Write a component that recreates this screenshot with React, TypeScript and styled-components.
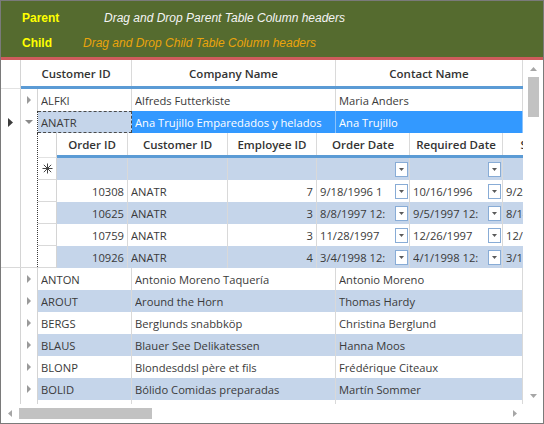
import React from "react";
import styled, { createGlobalStyle } from "styled-components";

const GlobalStyle = createGlobalStyle`
  html, body { margin: 0; padding: 0; background: #ffffff; }
  *, *::before, *::after { box-sizing: border-box; }
`;

const FONT = `"Open Sans", "Noto Sans", Arial, sans-serif`;
const LINE = "#d9d9d9";
const ALT = "#c5d5ea";
const SEL = "#3399ff";
const ACCENT = "#5b9bd5";

type Dir = "right" | "down" | "up" | "left";

const Tri: React.FC<{ dir: Dir; w: number; h: number; color: string }> = ({ dir, w, h, color }) => {
  let pts = "";
  if (dir === "right") pts = `0,0 ${w},${h / 2} 0,${h}`;
  if (dir === "left") pts = `${w},0 0,${h / 2} ${w},${h}`;
  if (dir === "down") pts = `0,0 ${w},0 ${w / 2},${h}`;
  if (dir === "up") pts = `0,${h} ${w},${h} ${w / 2},0`;
  return (
    <svg width={w} height={h} viewBox={`0 0 ${w} ${h}`} style={{ display: "block" }}>
      <polygon points={pts} fill={color} />
    </svg>
  );
};

const NewRowMark: React.FC = () => (
  <svg width="11" height="11" viewBox="0 0 11 11" style={{ display: "block" }}>
    <g stroke="#444" strokeWidth="1" fill="none">
      <line x1="5.5" y1="0.5" x2="5.5" y2="10.5" />
      <line x1="0.5" y1="5.5" x2="10.5" y2="5.5" />
      <line x1="1.8" y1="1.8" x2="9.2" y2="9.2" />
      <line x1="9.2" y1="1.8" x2="1.8" y2="9.2" />
    </g>
  </svg>
);

/* ---------- frame & drop panel ---------- */

const Frame = styled.div`
  width: 544px;
  height: 424px;
  border: 1px solid #7a7a7a;
  display: flex;
  flex-direction: column;
  background: #ffffff;
  overflow: hidden;
  font-family: ${FONT};
  font-size: 11.2px;
  color: #3a3a3a;
`;

const DropPanel = styled.div`
  flex: none;
  height: 59px;
  background: #556b2f;
  border-bottom: 3px solid #cd5c5c;
  padding-top: 4px;
  display: flex;
  flex-direction: column;
  font-family: "Liberation Sans", Arial, sans-serif;
  font-size: 12px;
`;

const DropRow = styled.div`
  height: 25px;
  display: flex;
  align-items: center;
  padding-left: 21px;
`;

const DropLabel = styled.span<{ $w: number }>`
  flex: none;
  width: ${(p) => p.$w}px;
  color: #ffff00;
  font-weight: bold;
`;

const DropHint = styled.span<{ $color: string }>`
  color: ${(p) => p.$color};
  font-style: italic;
`;

/* ---------- grid shell ---------- */

const GridArea = styled.div`
  flex: 1;
  display: flex;
  flex-direction: column;
  min-height: 0;
`;

const GridMain = styled.div`
  flex: 1;
  display: flex;
  min-height: 0;
`;

const Viewport = styled.div`
  flex: 1;
  min-width: 0;
  overflow: hidden;
  display: flex;
  flex-direction: column;
`;

/* ---------- header ---------- */

const HeaderRow = styled.div<{ $h: number }>`
  flex: none;
  display: flex;
  height: ${(p) => p.$h}px;
`;

const Corner = styled.div<{ $w: number }>`
  flex: none;
  width: ${(p) => p.$w}px;
  border-right: 1px solid #d4d4d4;
  border-bottom: 1px solid #e2e2e2;
  background: #ffffff;
`;

const HeadCells = styled.div`
  flex: 1;
  min-width: 0;
  display: flex;
  border-bottom: 3px solid ${ACCENT};
  overflow: hidden;
`;

const HeadCell = styled.div<{ $w: number }>`
  flex: none;
  width: ${(p) => p.$w}px;
  display: flex;
  align-items: center;
  justify-content: center;
  font-size: 11.5px;
  font-weight: 600;
  color: #333333;
  border-right: 1px solid #dadada;
  white-space: nowrap;
  overflow: hidden;
`;

/* ---------- rows ---------- */

const Row = styled.div<{ $h: number }>`
  flex: none;
  display: flex;
  height: ${(p) => p.$h}px;
`;

const SideCell = styled.div<{ $w: number; $lined?: boolean; $dotted?: boolean }>`
  flex: none;
  width: ${(p) => p.$w}px;
  display: flex;
  align-items: center;
  justify-content: center;
  background: #ffffff;
  border-right: 1px ${(p) => (p.$dotted ? "dotted #3a3a3a" : "solid #d4d4d4")};
  border-bottom: ${(p) => (p.$lined ? `1px solid ${LINE}` : "none")};
`;

type CellState = "plain" | "alt" | "selected" | "focus";

const DataCell = styled.div<{ $w: number; $state: CellState; $align?: "left" | "right" }>`
  flex: none;
  width: ${(p) => p.$w}px;
  display: flex;
  align-items: center;
  justify-content: ${(p) => (p.$align === "right" ? "flex-end" : "flex-start")};
  padding: 0 ${(p) => (p.$align === "right" ? 3 : 0)}px 0 ${(p) => (p.$align === "right" ? 0 : 3)}px;
  white-space: nowrap;
  overflow: hidden;
  background: ${(p) => (p.$state === "selected" ? SEL : p.$state === "plain" ? "#ffffff" : ALT)};
  color: ${(p) => (p.$state === "selected" ? "#ffffff" : "#3a3a3a")};
  border-right: 1px solid ${(p) => (p.$state === "selected" ? "#8cc3fb" : LINE)};
  ${(p) =>
    p.$state === "focus"
      ? `border: 1px dashed #4a4a4a; border-left: none; padding-left: 3px;`
      : ""}
`;

const CellText = styled.span`
  flex: 1;
  min-width: 0;
  overflow: hidden;
  white-space: nowrap;
`;

const DropBtn = styled.span`
  flex: none;
  width: 13px;
  height: 15px;
  margin-right: 1px;
  border: 1px solid #88acd6;
  background: #ffffff;
  display: flex;
  align-items: center;
  justify-content: center;
`;

/* ---------- detail (child table) ---------- */

const DetailRow = styled.div<{ $h: number }>`
  flex: none;
  display: flex;
  height: ${(p) => p.$h}px;
`;

const DetailSide = styled.div`
  flex: none;
  display: flex;
  border-bottom: 1px solid ${LINE};
`;

const ChildGrid = styled.div`
  flex: 1;
  min-width: 0;
  overflow: hidden;
  display: flex;
  flex-direction: column;
`;

/* ---------- scrollbars ---------- */

const VScroll = styled.div`
  flex: none;
  width: 20px;
  display: flex;
  flex-direction: column;
  background: #ffffff;
`;

const ArrowBox = styled.div<{ $h?: number; $w?: number }>`
  flex: none;
  ${(p) => (p.$h ? `height: ${p.$h}px;` : "")}
  ${(p) => (p.$w ? `width: ${p.$w}px;` : "")}
  display: flex;
  align-items: center;
  justify-content: center;
`;

const VThumb = styled.div`
  flex: none;
  width: 11px;
  height: 40px;
  margin-left: 5px;
  background: #c2c2c2;
`;

const Spacer = styled.div`
  flex: 1;
`;

const HScroll = styled.div`
  flex: none;
  height: 19px;
  display: flex;
  background: #ffffff;
`;

const HTrack = styled.div`
  flex: 1;
  display: flex;
`;

const HThumb = styled.div`
  flex: none;
  width: 133px;
  height: 11px;
  margin-top: 4px;
  background: #c2c2c2;
`;

const ScrollCorner = styled.div`
  flex: none;
  width: 20px;
`;

/* ---------- data ---------- */

const parentCols = [
  { key: "id", title: "Customer ID", w: 94 },
  { key: "company", title: "Company Name", w: 204 },
  { key: "contact", title: "Contact Name", w: 187 },
];

const customers = [
  ["ALFKI", "Alfreds Futterkiste", "Maria Anders"],
  ["ANATR", "Ana Trujillo Emparedados y helados", "Ana Trujillo"],
  ["ANTON", "Antonio Moreno Taquería", "Antonio Moreno"],
  ["AROUT", "Around the Horn", "Thomas Hardy"],
  ["BERGS", "Berglunds snabbköp", "Christina Berglund"],
  ["BLAUS", "Blauer See Delikatessen", "Hanna Moos"],
  ["BLONP", "Blondesddsl père et fils", "Frédérique Citeaux"],
  ["BOLID", "Bólido Comidas preparadas", "Martín Sommer"],
  ["", "", ""],
];

const childCols = [
  { title: "Order ID", w: 71 },
  { title: "Customer ID", w: 100 },
  { title: "Employee ID", w: 89 },
  { title: "Order Date", w: 93 },
  { title: "Required Date", w: 93 },
  { title: "Shipped Date", w: 110 },
];

const orders = [
  ["10308", "ANATR", "7", "9/18/1996 1", "10/16/1996", "9/24/1996"],
  ["10625", "ANATR", "3", "8/8/1997 12:", "9/5/1997 12:", "8/14/1997"],
  ["10759", "ANATR", "3", "11/28/1997", "12/26/1997", "12/12/1997"],
  ["10926", "ANATR", "4", "3/4/1998 12:", "4/1/1998 12:", "3/11/1998"],
];

const SELECTED = 1;

const ParentRow: React.FC<{ data: string[]; index: number }> = ({ data, index }) => {
  const selected = index === SELECTED;
  const alt = index % 2 === 1;
  const empty = data[0] === "";
  return (
    <Row $h={22}>
      <SideCell $w={20}>{selected && <Tri dir="right" w={5} h={9} color="#3c3c3c" />}</SideCell>
      <SideCell $w={17} $dotted={selected}>
        {!empty && (selected ? <Tri dir="down" w={8} h={4} color="#8a8a8a" /> : <Tri dir="right" w={4} h={8} color="#9a9a9a" />)}
      </SideCell>
      {parentCols.map((c, ci) => {
        const state: CellState = selected ? (ci === 0 ? "focus" : "selected") : alt ? "alt" : "plain";
        return (
          <DataCell key={c.key} $w={c.w} $state={state}>
            <CellText>{data[ci]}</CellText>
          </DataCell>
        );
      })}
    </Row>
  );
};

const ChildRow: React.FC<{ data?: string[]; alt: boolean }> = ({ data, alt }) => {
  const state: CellState = alt ? "alt" : "plain";
  return (
    <Row $h={22}>
      <SideCell $w={19} $lined>
        {!data && <NewRowMark />}
      </SideCell>
      {childCols.map((c, ci) => (
        <DataCell key={c.title} $w={c.w} $state={state} $align={ci === 0 || ci === 2 ? "right" : "left"}>
          {ci === 0 || ci === 2 ? (
            data ? data[ci] : ""
          ) : (
            <>
              <CellText>{data ? data[ci] : ""}</CellText>
              {(ci === 3 || ci === 4) && (
                <DropBtn>
                  <Tri dir="down" w={5} h={3} color="#5a5a5a" />
                </DropBtn>
              )}
            </>
          )}
        </DataCell>
      ))}
    </Row>
  );
};

export default function App() {
  return (
    <>
      <GlobalStyle />
      <Frame>
        <DropPanel>
          <DropRow>
            <DropLabel $w={82}>Parent</DropLabel>
            <DropHint $color="#f4f4f4">Drag and Drop Parent Table Column headers</DropHint>
          </DropRow>
          <DropRow>
            <DropLabel $w={61}>Child</DropLabel>
            <DropHint $color="#eaa40c">Drag and Drop Child Table Column headers</DropHint>
          </DropRow>
        </DropPanel>

        <GridArea>
          <GridMain>
            <Viewport>
              <HeaderRow $h={29}>
                <Corner $w={20} />
                <HeadCells>
                  <HeadCell $w={111}>Customer ID</HeadCell>
                  <HeadCell $w={204}>Company Name</HeadCell>
                  <HeadCell $w={187}>Contact Name</HeadCell>
                </HeadCells>
              </HeaderRow>

              {customers.slice(0, 2).map((c, i) => (
                <ParentRow key={i} data={c} index={i} />
              ))}

              <DetailRow $h={135}>
                <DetailSide>
                  <SideCell $w={20} />
                  <SideCell $w={17} $dotted />
                </DetailSide>
                <ChildGrid>
                  <HeaderRow $h={25}>
                    <Corner $w={19} />
                    <HeadCells>
                      {childCols.map((c) => (
                        <HeadCell key={c.title} $w={c.w}>
                          {c.title}
                        </HeadCell>
                      ))}
                    </HeadCells>
                  </HeaderRow>
                  <ChildRow alt />
                  {orders.map((o, i) => (
                    <ChildRow key={o[0]} data={o} alt={i % 2 === 1} />
                  ))}
                </ChildGrid>
              </DetailRow>

              {customers.slice(2).map((c, i) => (
                <ParentRow key={i + 2} data={c} index={i + 2} />
              ))}
            </Viewport>

            <VScroll>
              <ArrowBox $h={17}>
                <Tri dir="up" w={7} h={4} color="#a6a6a6" />
              </ArrowBox>
              <VThumb />
              <Spacer />
              <ArrowBox $h={17}>
                <Tri dir="down" w={7} h={4} color="#a6a6a6" />
              </ArrowBox>
            </VScroll>
          </GridMain>

          <HScroll>
            <HTrack>
              <ArrowBox $w={18}>
                <Tri dir="left" w={4} h={7} color="#a6a6a6" />
              </ArrowBox>
              <HThumb />
              <Spacer />
              <ArrowBox $w={17}>
                <Tri dir="right" w={4} h={7} color="#a6a6a6" />
              </ArrowBox>
            </HTrack>
            <ScrollCorner />
          </HScroll>
        </GridArea>
      </Frame>
    </>
  );
}
